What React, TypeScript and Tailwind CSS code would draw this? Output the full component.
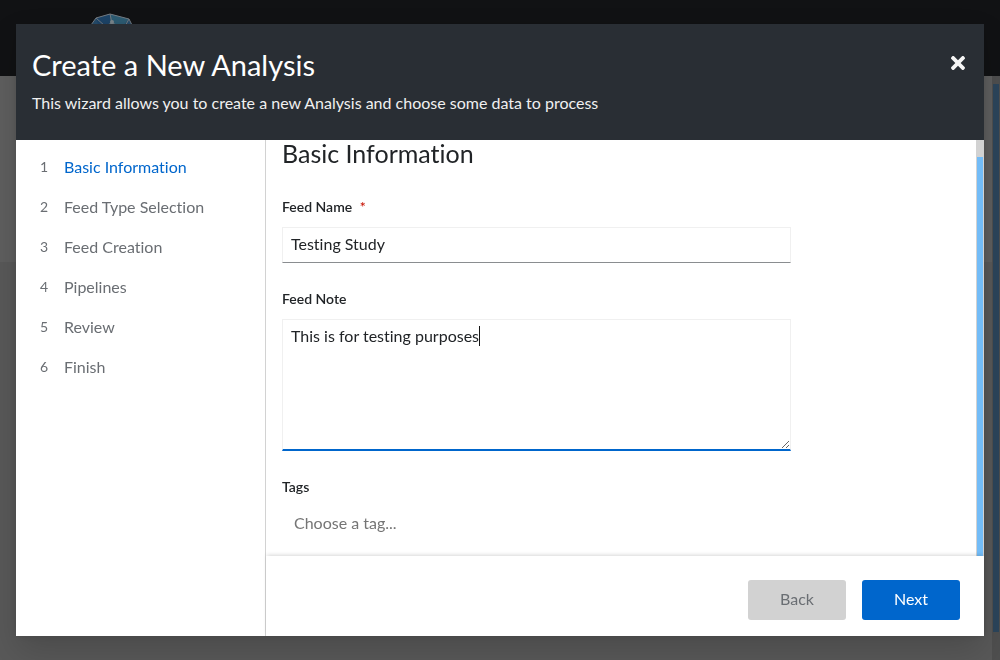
import { useState } from "react";

const steps = [
  "Basic Information",
  "Feed Type Selection",
  "Feed Creation",
  "Pipelines",
  "Review",
  "Finish",
];

function Backdrop() {
  return (
    <div aria-hidden="true" className="flex h-screen flex-col bg-[#595959]">
      <div className="h-[76px] shrink-0 bg-[#111214] pl-[90px] pt-3">
        <svg width="44" height="44" viewBox="0 0 44 44" fill="none">
          <path d="M1 13 6 6l14-4 19 5 4 8v16L22 42 1 31Z" fill="#264c6b" />
          <path d="M6 6 20 2v9L9 16Z" fill="#1d4468" />
          <path d="m20 2 19 5-7 8-12-4Z" fill="#2d5c73" />
          <path
            d="M1 13 6 6l14-4 19 5 4 8M20 2l2 9-10 6M6 6l9 8 7-3 12 5 5-9"
            stroke="#737a80"
            strokeWidth="1"
          />
          <circle cx="22" cy="10" r="2" fill="#7b868c" />
        </svg>
      </div>
      <div className="flex min-h-0 flex-1">
        <div className="flex-1">
          <div className="h-[186px] bg-[#5f5f5f]" />
        </div>
        <div className="w-2 bg-[#4f4f4f] px-px pb-7 pt-2">
          <div className="h-full bg-[#2c455b]" />
        </div>
      </div>
    </div>
  );
}

function StepNav() {
  return (
    <nav aria-label="Wizard steps" className="w-[250px] shrink-0 border-r border-[#d2d2d2] pl-6 pt-[15px]">
      <ol className="flex flex-col gap-4">
        {steps.map((step, i) => (
          <li key={step} className="flex h-6 items-center">
            <span className="w-6 shrink-0 text-sm leading-6 text-[#6a6e73]">{i + 1}</span>
            <button
              type="button"
              aria-current={i === 0 ? "step" : undefined}
              className={i === 0 ? "text-base text-[#0066cc]" : "text-base text-[#6a6e73]"}
            >
              {step}
            </button>
          </li>
        ))}
      </ol>
    </nav>
  );
}

function BasicInformation() {
  const [name, setName] = useState("Testing Study");
  const [note, setNote] = useState("This is for testing purposes");

  return (
    <form className="min-w-0 flex-1 px-4 text-[#212427]">
      <h2 className="text-[25px] leading-[26px]">Basic Information</h2>
      <div className="flex w-3/4 flex-col pt-[29px]">
        <label htmlFor="feed-name" className="text-sm font-semibold leading-6">
          Feed Name <span className="ml-1 text-[#c9190b]">*</span>
        </label>
        <input
          id="feed-name"
          required
          value={name}
          onChange={(e) => setName(e.target.value)}
          className="mt-2 h-9 rounded-none border border-[#f0f0f0] border-b-[#8a8d90] px-2 pb-1 text-base outline-none"
        />
        <label htmlFor="feed-note" className="mt-6 text-sm font-semibold leading-6">
          Feed Note
        </label>
        <div className="relative mt-2 flex">
          <textarea
            id="feed-note"
            value={note}
            onChange={(e) => setNote(e.target.value)}
            className="h-[132px] w-full resize rounded-none border border-b-2 border-[#f0f0f0] border-b-[#0066cc] px-2 py-1 text-base leading-6 caret-transparent outline-none"
          />
          <div
            aria-hidden="true"
            className="pointer-events-none absolute inset-0 flex items-start border border-transparent px-2 py-1 text-base leading-6"
          >
            <span className="invisible whitespace-pre">{note}</span>
            <span className="mt-0.5 h-5 w-px bg-[#151515]" />
          </div>
        </div>
        <label htmlFor="tags" className="mt-6 text-sm font-semibold leading-6">
          Tags
        </label>
        <input
          id="tags"
          placeholder="Choose a tag..."
          className="mt-1 h-10 px-3 pb-0.5 text-base outline-none placeholder:text-[#757575]"
        />
      </div>
    </form>
  );
}

export default function App() {
  return (
    <div className="font-['Lato',sans-serif] [font-variant-ligatures:none]">
      <Backdrop />
      <section
        role="dialog"
        aria-labelledby="wizard-title"
        className="fixed inset-x-4 inset-y-6 flex flex-col bg-white shadow-[0_16px_32px_0_rgba(3,3,3,0.16),0_0_8px_0_rgba(3,3,3,0.1)]"
      >
        <header className="flex h-[116px] shrink-0 items-start justify-between bg-[#292e34] px-4 pt-[23px] text-white">
          <div>
            <h1 id="wizard-title" className="text-[29px] leading-9">
              Create a New Analysis
            </h1>
            <p className="mt-2 text-base leading-6 text-[#f0f0f0]">
              This wizard allows you to create a new Analysis and choose some data to process
            </p>
          </div>
          <button type="button" aria-label="Close" className="mt-1.5 p-[3px]">
            <svg width="14" height="14" viewBox="0 80 352 352" fill="#f5f5f5">
              <path d="M242.72 256l100.07-100.07c12.28-12.28 12.28-32.19 0-44.48l-22.24-22.24c-12.28-12.28-32.19-12.28-44.48 0L176 189.28 75.93 89.21c-12.28-12.28-32.19-12.28-44.48 0L9.21 111.45c-12.28 12.28-12.28 32.19 0 44.48L109.28 256 9.21 356.07c-12.28 12.28-12.28 32.19 0 44.48l22.24 22.24c12.28 12.28 32.2 12.28 44.48 0L176 322.72l100.07 100.07c12.28 12.28 32.2 12.28 44.48 0l22.24-22.24c12.28-12.28 12.28-32.19 0-44.48L242.72 256z" />
            </svg>
          </button>
        </header>
        <div className="flex min-h-0 flex-1">
          <StepNav />
          <div className="flex min-w-0 flex-1 flex-col">
            <div className="flex min-h-0 flex-1">
              <BasicInformation />
              <div aria-hidden="true" className="w-2 bg-[#d2d2d2] px-px pt-[17px]">
                <div className="h-full bg-[#73bcf7]" />
              </div>
            </div>
            <footer className="z-10 flex h-20 shrink-0 items-end justify-end gap-4 bg-white px-6 pb-4 shadow-[0_-2px_4px_-1px_rgba(3,3,3,0.16)]">
              <button
                type="button"
                disabled
                className="h-10 rounded-[3px] bg-[#d2d2d2] px-8 pb-0.5 text-base text-[#6a6e73]"
              >
                Back
              </button>
              <button type="button" className="h-10 rounded-[3px] bg-[#0066cc] px-8 pb-0.5 text-base text-white">
                Next
              </button>
            </footer>
          </div>
        </div>
      </section>
    </div>
  );
}
